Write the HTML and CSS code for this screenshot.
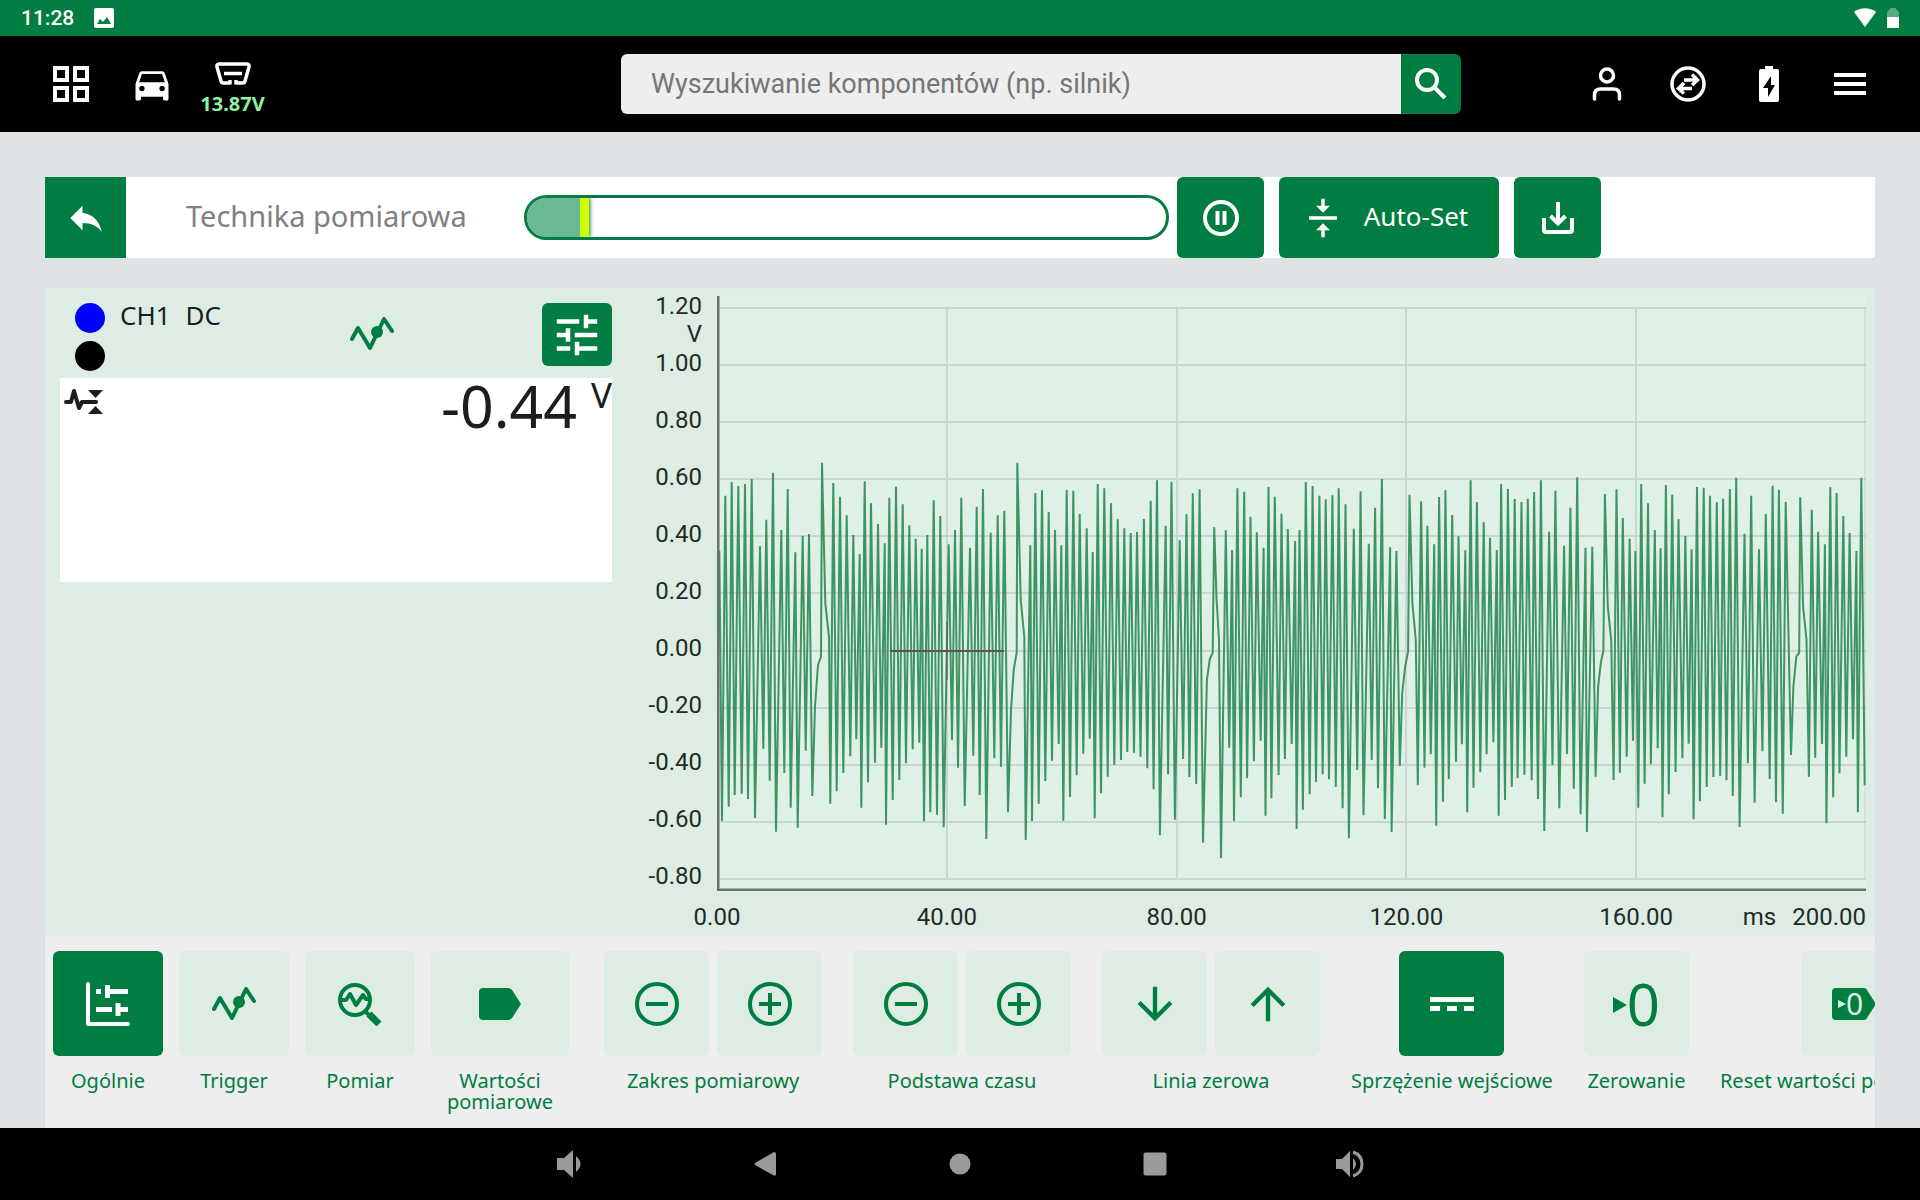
FILE: index.html
```html
<!DOCTYPE html>
<html lang="pl">
<head>
<meta charset="utf-8">
<title>Technika pomiarowa</title>
<meta name="viewport" content="width=device-width, initial-scale=1">
<link rel="stylesheet" href="styles.css">
</head>
<body>
<div class="status">
  <span class="clock">11:28</span>
  <svg width="20" height="20" viewBox="0 0 20 20"><path fill="#fff" fill-rule="evenodd" d="M2 0h16a2 2 0 0 1 2 2v16a2 2 0 0 1-2 2H2a2 2 0 0 1-2-2V2a2 2 0 0 1 2-2zM3 16h14l-4-7-4 5-3-3z"/></svg>
  <svg class="status-end" width="22" height="20" viewBox="0 0 22 20"><path fill="#fff" d="M0 4C6-1 16-1 22 4L11 19z"/></svg>
  <svg width="12" height="20" viewBox="0 0 12 20"><path fill="#fff" opacity=".35" d="M0 4l3-3V0h6v1l3 3v5H0z"/><path fill="#fff" d="M0 9h12v11H0z"/></svg>
</div>

<header class="header">
  <button class="nav-btn" aria-label="Menu główne"><svg width="36" height="36" viewBox="0 0 36 36" fill="none" stroke="#fff" stroke-width="4"><path d="M2 2h12v12H2zM22 2h12v12H22zM2 22h12v12H2zM22 22h12v12H22z"/></svg></button>
  <button class="nav-btn" aria-label="Pojazd"><svg width="44" height="44" viewBox="0 0 24 24" fill="#fff"><path d="M18.92 6.01C18.72 5.42 18.16 5 17.5 5h-11c-.66 0-1.21.42-1.42 1.01L3 12v8c0 .55.45 1 1 1h1c.55 0 1-.45 1-1v-1h12v1c0 .55.45 1 1 1h1c.55 0 1-.45 1-1v-8l-2.08-5.99zM6.5 16c-.83 0-1.5-.67-1.5-1.5S5.67 13 6.5 13s1.5.67 1.5 1.5S7.33 16 6.5 16zm11 0c-.83 0-1.5-.67-1.5-1.5s.67-1.5 1.5-1.5 1.5.67 1.5 1.5-.67 1.5-1.5 1.5zM5 11l1.5-4.5h11L19 11H5z"/></svg></button>
  <button class="nav-btn nav-obd"><svg width="36" height="24" viewBox="0 0 36 24" fill="none" stroke="#fff" stroke-width="3.5"><path stroke-linejoin="round" d="M15 21H8.500q-2 0-2.500-2L2 5q-.5-3 2-3h28q2.500 0 2 3l-4 14q-.5 2-2.500 2H21M15 18v4.500M21 18v4.500"/><path d="M9 11.500h18"/></svg><span>13.87V</span></button>
  <form class="search" role="search">
    <input type="search" aria-label="Wyszukiwanie komponentów" placeholder="Wyszukiwanie komponentów (np. silnik)">
    <button type="button" aria-label="Szukaj"><svg width="34" height="34" viewBox="0 0 34 34" fill="none" stroke="#fff" stroke-width="4"><circle cx="13" cy="13" r="10"/><path d="M20 20l11 11"/></svg></button>
  </form>
  <button class="nav-btn" aria-label="Użytkownik"><svg width="36" height="36" viewBox="0 0 36 36" fill="none" stroke="#fff" stroke-width="3.500" stroke-linecap="round"><circle cx="18" cy="9.500" r="6.500"/><path d="M5.500 33v-4q0-6 6-6h13q6 0 6 6v4"/></svg></button>
  <button class="nav-btn" aria-label="Połączenie"><svg width="36" height="36" viewBox="0 0 36 36" fill="none" stroke="#fff" stroke-width="3.500"><circle cx="18" cy="18" r="16"/><path d="M14 14h13M22 8.500l5.500 5.500-5.500 5M22 22.500H9M14 17l-5.500 5.500 5.500 5"/></svg></button>
  <button class="nav-btn" aria-label="Akumulator"><svg width="20" height="36" viewBox="0 0 20 36"><path fill="#fff" fill-rule="evenodd" d="M6 0h8v3h4q2 0 2 2v29q0 2-2 2H2q-2 0-2-2V5q0-2 2-2h4zM12 10L4 22h5v9l7-12h-4z"/></svg></button>
  <button class="nav-btn" aria-label="Menu"><svg width="32" height="24" viewBox="0 0 32 24" stroke="#fff" stroke-width="4"><path d="M0 3h32M0 12h32M0 21h32"/></svg></button>
</header>

<main class="page">
  <div class="toolbar">
    <button class="back" aria-label="Wstecz"><svg width="42" height="42" viewBox="0 0 24 24" fill="#fff"><path d="M10 9V5l-7 7 7 7v-4.100c5 0 8.500 1.600 11 5.100-1-5-4-10-11-11z"/></svg></button>
    <h1>Technika pomiarowa</h1>
    <div class="progress" role="progressbar" aria-label="Bufor" aria-valuenow="10"><div class="fill" style="width:9.7%"></div></div>
    <button class="tool" aria-label="Pauza"><svg width="36" height="36" viewBox="0 0 36 36" fill="none" stroke="#fff" stroke-width="4"><circle cx="18" cy="18" r="16"/><path d="M14.500 11v14M21.500 11v14"/></svg></button>
    <button class="tool tool-auto"><svg width="42" height="42" viewBox="0 0 24 24" fill="#fff"><path d="M8 19h3v4h2v-4h3l-4-4-4 4zm8-14h-3V1h-2v4H8l4 4 4-4zM4 11v2h16v-2H4z"/></svg><span>Auto-Set</span></button>
    <button class="tool" aria-label="Zapisz"><svg width="32" height="32" viewBox="0 0 32 32" fill="none" stroke="#fff" stroke-width="4"><path stroke-linejoin="round" d="M2 16v12q0 2 2 2h24q2 0 2-2V16"/><path d="M16 0v21M8.500 14l7.500 7.500 7.500-7.500"/></svg></button>
  </div>

  <section class="scope">
    <div class="channel">
      <div class="channel-head">
        <div class="probes"><i class="probe blue"></i><i class="probe"></i></div>
        <div class="channel-name"><span>CH1</span><span>DC</span></div>
        <svg class="trigger" width="44" height="36" viewBox="0 0 44 36"><use href="#wave"/></svg>
        <button class="tune" aria-label="Ustawienia kanału"><svg width="54" height="54" viewBox="0 0 24 24" fill="#fff"><path d="M3 17v2h6v-2H3zM3 5v2h10V5H3zm10 16v-2h8v-2h-8v-2h-2v6h2zM7 9v2H3v2h4v2h2V9H7zm14 4v-2H11v2h10zm-6-4h2V7h4V5h-4V3h-2v6z"/></svg></button>
      </div>
      <div class="reading">
        <svg width="40" height="28" viewBox="0 0 40 28" fill="none" stroke="#1d1d1d"><path stroke-width="4" stroke-linecap="round" stroke-linejoin="round" d="M2 14h5L10 3l5 17 3-6h14"/><path fill="#1d1d1d" stroke="none" d="M24 2h15l-7.500 8zM24 26h15l-7.500-8z"/></svg>
        <output class="value">-0.44</output><span class="unit">V</span>
      </div>
    </div>

    <figure class="chart">
      <ol class="y-axis">
        <li>1.20<span class="y-unit">V</span></li><li>1.00</li><li>0.80</li><li>0.60</li><li>0.40</li><li>0.20</li><li>0.00</li><li>-0.20</li><li>-0.40</li><li>-0.60</li><li>-0.80</li>
      </ol>
      <svg class="plot" viewBox="717 296 1149 595" preserveAspectRatio="none" role="img" aria-label="Przebieg napięcia CH1">
        <path class="plot-bg" d="M717 296h1149v595H717z"/>
        <polyline id="signal" class="signal" points=""/>
        <path class="grid" d="M718 308h1148M718 365h1148M718 422h1148M718 479h1148M718 536h1148M718 593h1148M718 651h1148M718 708h1148M718 765h1148M718 822h1148M718 879h1148M947 308v571M1177 308v571M1406 308v571M1636 308v571"/>
        <path class="grid faint" d="M1865 308v571"/>
        <path class="cross" d="M890 651h114"/><path class="cross faint" d="M947 622v58"/>
        <path class="axis" d="M718 296v594h1148"/>
      </svg>
      <ol class="x-axis">
        <li>0.00</li><li>40.00</li><li>80.00</li><li>120.00</li><li>160.00</li><li class="last"><span>ms</span><span>200.00</span></li>
      </ol>
    </figure>
  </section>

  <nav class="strip">
    <div class="item tab"><button class="key active" aria-labelledby="l1"><svg width="44" height="44" viewBox="0 0 44 44" fill="none" stroke="#fff"><path stroke-width="4" stroke-linecap="round" stroke-linejoin="round" d="M2 2v40h40"/><path stroke-width="5" d="M10 9.500h5M21 9.500h21M21.500 3v13M10 27.500h16M32 27.500h10M32 21v13"/></svg></button><span class="label" id="l1">Ogólnie</span></div>
    <div class="item tab"><button class="key" aria-labelledby="l2"><svg width="44" height="36" viewBox="0 0 44 36"><g id="wave"><path fill="none" stroke="#007d41" stroke-width="4" stroke-linecap="round" stroke-linejoin="round" d="M2 23L8 12l12 20L34 3l8 12"/><circle cx="27" cy="16" r="6" fill="#007d41"/></g></svg></button><span class="label" id="l2">Trigger</span></div>
    <div class="item tab"><button class="key" aria-labelledby="l3"><svg width="44" height="44" viewBox="0 0 44 44" fill="none" stroke="#007d41"><circle stroke-width="4" cx="17" cy="18" r="15"/><path stroke-width="4" stroke-linejoin="round" d="M3 18h5l4-6 6 11 7-10 3 4h4"/><path stroke-width="4" d="M26 28l6 6"/><path stroke-width="7" d="M31 32l10 10"/></svg></button><span class="label" id="l3">Pomiar</span></div>
    <div class="item tab wide"><button class="key" aria-labelledby="l4"><svg width="42" height="32" viewBox="0 0 42 32"><path fill="#007d41" d="M4 0h25q2 0 4 2l9 14-9 14q-2 2-4 2H4q-4 0-4-4V4q0-4 4-4z"/></svg></button><span class="label" id="l4">Wartości pomiarowe</span></div>
    <div class="item group"><div class="pair">
      <button class="key" aria-label="Zakres mniej"><svg width="44" height="44" viewBox="0 0 44 44" fill="none" stroke="#007d41" stroke-width="4"><circle cx="22" cy="22" r="20"/><path d="M11 22h22"/></svg></button>
      <button class="key" aria-label="Zakres więcej"><svg width="44" height="44" viewBox="0 0 44 44" fill="none" stroke="#007d41" stroke-width="4"><circle cx="22" cy="22" r="20"/><path d="M11 22h22M22 11v22"/></svg></button></div><span class="label">Zakres pomiarowy</span></div>
    <div class="item group"><div class="pair">
      <button class="key" aria-label="Czas mniej"><svg width="44" height="44" viewBox="0 0 44 44" fill="none" stroke="#007d41" stroke-width="4"><circle cx="22" cy="22" r="20"/><path d="M11 22h22"/></svg></button>
      <button class="key" aria-label="Czas więcej"><svg width="44" height="44" viewBox="0 0 44 44" fill="none" stroke="#007d41" stroke-width="4"><circle cx="22" cy="22" r="20"/><path d="M11 22h22M22 11v22"/></svg></button></div><span class="label">Podstawa czasu</span></div>
    <div class="item group"><div class="pair">
      <button class="key" aria-label="Linia w dół"><svg width="52" height="52" viewBox="0 0 24 24" fill="#007d41"><path d="M20 12l-1.410-1.410L13 16.170V4h-2v12.170l-5.580-5.590L4 12l8 8 8-8z"/></svg></button>
      <button class="key" aria-label="Linia w górę"><svg width="52" height="52" viewBox="0 0 24 24" fill="#007d41"><path d="M4 12l1.410 1.410L11 7.830V20h2V7.830l5.580 5.590L20 12l-8-8-8 8z"/></svg></button></div><span class="label">Linia zerowa</span></div>
    <div class="item group"><button class="key active" aria-labelledby="l5"><svg width="44" height="20" viewBox="0 0 44 20" fill="#fff"><path d="M0 3h44v5H0zM0 12h10v5H0zM17 12h10v5H17zM34 12h10v5H34z"/></svg></button><span class="label" id="l5">Sprzężenie wejściowe</span></div>
    <div class="item group"><button class="key zero" aria-labelledby="l6"><svg width="14" height="16" viewBox="0 0 14 16"><path fill="#007d41" d="M0 0l14 8-14 8z"/></svg>0</button><span class="label" id="l6">Zerowanie</span></div>
    <div class="item group"><button class="key" aria-labelledby="l7"><svg width="44" height="32" viewBox="0 0 44 32"><path fill="#007d41" d="M4 0h28q2 0 3 2l9 14-9 14q-1 2-3 2H4q-4 0-4-4V4q0-4 4-4z"/><path fill="#deede4" d="M6 12l8 4-8 4z"/><text class="tag-zero" x="14" y="27">0</text></svg></button><span class="label" id="l7">Reset wartości pomiarowych</span></div>
  </nav>
</main>

<footer class="system">
  <button aria-label="Ciszej"><svg width="26" height="28" viewBox="0 0 26 28" fill="#9a9a9a"><path d="M0 8h7l9-8v28l-9-8H0zM19 6q9 8 0 16z"/></svg></button>
  <button aria-label="Wstecz"><svg width="22" height="26" viewBox="0 0 22 26" fill="#9a9a9a"><path d="M20 1q2 0 2 2v20q0 3-3 1L1 14q-1-1 0-2z"/></svg></button>
  <button aria-label="Ekran główny"><svg width="22" height="22" viewBox="0 0 22 22" fill="#9a9a9a"><circle cx="11" cy="11" r="10.500"/></svg></button>
  <button aria-label="Ostatnie"><svg width="24" height="24" viewBox="0 0 24 24" fill="#9a9a9a"><rect x=".5" y=".5" width="23" height="23" rx="2"/></svg></button>
  <button aria-label="Głośniej"><svg width="28" height="28" viewBox="0 0 28 28" fill="#9a9a9a"><path d="M0 9h6l8-8v26l-8-8H0zM17 8q6 6 0 12z"/><path fill="none" stroke="#9a9a9a" stroke-width="3" d="M17 2q9 3 9 12t-9 12"/></svg></button>
</footer>
<script src="chart.js"></script>
</body>
</html>
```
FILE: styles.css
```css
* { box-sizing: border-box; }
body {
  margin: 0;
  min-height: 100vh;
  display: flex;
  flex-direction: column;
  background: #dfe3e6;
  font-family: "Noto Sans", sans-serif;
  overflow-x: hidden;
}
button { border: 0; padding: 0; margin: 0; background: none; color: inherit; font: inherit; display: flex; align-items: center; justify-content: center; }
svg { display: block; flex: none; }
ol { list-style: none; margin: 0; padding: 0; }

.status { height: 36px; padding: 0 21px; display: flex; align-items: center; gap: 20px; background: #007d41; color: #fff; }
.clock { font: 500 21px/24px Roboto, sans-serif; }
.status-end { margin-left: auto; margin-right: -9px; }

.header { height: 96px; padding: 0 30px; display: flex; align-items: center; background: #000; }
.nav-btn { flex: none; width: 81px; height: 96px; }
.nav-obd { flex-direction: column; gap: 4px; padding-top: 12px; color: #90f0a4; font-weight: 700; font-size: 20px; line-height: 28px; }
.search { flex: 0 1 840px; margin: 0 105px 0 auto; height: 60px; display: flex; border-radius: 6px; overflow: hidden; }
.search input { flex: 1; min-width: 0; border: 0; padding: 0 30px; background: #eee; font: 27px Roboto, sans-serif; color: #222; }
.search input::placeholder { color: #757575; opacity: 1; }
.search button { width: 60px; background: #007d41; }

.page { flex: 1; padding: 45px 45px 0; display: flex; flex-direction: column; }
.toolbar { height: 81px; padding-right: 274px; display: flex; align-items: center; background: #fff; }
.back { flex: none; width: 81px; height: 81px; background: #007d41; }
.toolbar h1 { flex: none; width: 398px; margin: 0; padding: 0 0 4px 60px; font-size: 29px; font-weight: 400; line-height: 40px; color: #808080; white-space: nowrap; }
.progress { flex: 1; height: 45px; margin-right: 8px; border: 3px solid #087a45; border-radius: 23px; overflow: hidden; background: #fff; }
.fill { height: 100%; background: #6ab896; border-right: 9px solid #d0ff00; box-shadow: 1px 0 4px #087a45; }
.tool { flex: none; width: 87px; height: 81px; border-radius: 6px; background: #007d41; color: #fff; font-size: 26px; gap: 20px; }
.tool + .tool { margin-left: 15px; }
.tool-auto { width: 220px; padding-right: 8px; }
.tool-auto span { padding-bottom: 3px; }

.scope { flex: 1; margin-top: 30px; display: grid; grid-template-columns: 567px 1fr; background: #deede4; }
.channel { padding: 15px 0 0 15px; }
.channel-head { height: 75px; display: flex; align-items: flex-start; color: #1d1d1d; }
.probes { padding-left: 15px; width: 60px; display: grid; gap: 8px; }
.probe { width: 30px; height: 30px; border-radius: 50%; background: #000; }
.blue { background: #00f; }
.channel-name { display: flex; gap: 15px; font-size: 26px; line-height: 24px; }
.trigger { margin: 13px 148px 0 auto; }
.tune { width: 70px; height: 63px; border-radius: 6px; background: #007d41; }
.reading { height: 204px; padding-left: 4px; display: flex; align-items: flex-start; background: #fff; color: #1d1d1d; }
.reading svg { margin-top: 10px; }
.value { margin-left: auto; font-size: 59px; line-height: 55px; }
.unit { margin-left: 14px; font-size: 35px; line-height: 34px; }

.chart { margin: 0 9px 0 0; display: grid; grid-template-columns: 105px 1fr; grid-template-rows: 1fr auto; font: 24px/28px Roboto, sans-serif; color: #222b27; }
.y-axis { padding: 4px 15px 1px 0; display: flex; flex-direction: column; justify-content: space-between; text-align: right; }
.y-axis li { position: relative; }
.y-unit { position: absolute; right: 0; top: 28px; }
.plot { width: 100%; height: 595px; margin-top: 8px; }
.plot-bg { fill: #dff0e7; }
.grid { stroke: #6a6a78; stroke-opacity: .18; stroke-width: 2; fill: none; }
.axis { stroke: #65746c; stroke-width: 3; fill: none; }
.cross { stroke: #5c5551; stroke-width: 2; }
.faint { opacity: .5; }
.signal { fill: none; stroke: #117a40; stroke-width: 2; stroke-opacity: .78; stroke-linejoin: bevel; }
.x-axis { grid-column: 2; padding-top: 6px; height: 45px; display: flex; justify-content: space-between; line-height: 40px; }
.x-axis li { width: 0; display: flex; justify-content: center; }
.x-axis .last { justify-content: flex-end; gap: 16px; }

.strip { height: 192px; padding: 15px 8px 0; display: flex; align-items: flex-start; overflow: hidden; background: #eee; color: #007d41; }
.item { flex: none; display: flex; flex-direction: column; align-items: center; gap: 14px; }
.label { font-size: 20px; line-height: 21px; text-align: center; white-space: nowrap; }
.key { width: 105px; height: 105px; border-radius: 6px; background: #deede4; }
.active { background: #007d41; }
.tab { width: 110px; margin-right: 16px; }
.tab .key { width: 100%; }
.wide { width: 138px; margin-right: 35px; }
.wide .label { width: 120px; white-space: normal; }
.group { margin-right: 31px; }
.pair { display: flex; gap: 8px; }
.zero { font-size: 58px; line-height: 58px; }
.zero svg { margin-top: 2px; }
.tag-zero { font: 30px "Noto Sans", sans-serif; fill: #deede4; }

.system { height: 72px; display: flex; justify-content: center; background: #000; }
.system button { width: 195px; height: 72px; }
```
FILE: chart.js
```js
// Turning points of the captured signal. Each block has its own origin and
// resolution (raw units per plot unit); points are x,y pairs.
const blocks = [
  { x: 640, y: 280, sx: 3, sy: 3, points: [
    238,812, 256,647, 275,606, 295,618, 315,612, 335,597, 360,799, 379,719, 399,578, 424,750,
    443,627, 466,817, 488,767, 507,762, 546,548, 580,609, 600,650, 620,706, 640,765, 659,822,
    674,604, 693,670, 714,732, 734,790, 748,653, 768,620, 788,673, 808,736, 827,776, 845,806,
    862,765, 881,661, 901,708, 926,793, 945,750, 964,653, 990,803, 1010,680, 1029,627, 1052,758,
    1073,706, 1093,692, 1132,548, 1171,796, 1186,639, 1206,631, 1226,696, 1245,750, 1264,796,
    1280,630, 1300,632, 1319,702, 1340,745, 1358,816, 1373,612, 1393,625, 1413,670, 1433,718,
    1453,745, 1472,759, 1491,756] },
  { x: 640, y: 600, sx: 3, sy: 3, points: [
    246,663, 266,620, 284,585, 305,581, 324,597, 345,655, 370,446, 389,542, 408,695, 433,519,
    452,623, 473,683, 497,452, 517,588, 525,320, 534,195, 543,170, 556,10, 567,110, 571,611,
    590,574, 610,519, 631,469, 649,418, 664,623, 684,547, 705,488, 724,443, 738,674, 758,600,
    778,540, 798,490, 818,448, 838,428, 852,664, 871,637, 891,644, 911,682, 936,421, 954,503,
    974,618, 1000,467, 1019,585, 1039,717, 1063,475, 1083,500, 1104,637, 1113,330, 1121,210,
    1130,157, 1142,0, 1153,110, 1157,720, 1176,663, 1196,611, 1216,543, 1236,482, 1256,432,
    1270,662, 1290,591, 1310,526, 1330,461, 1349,416, 1364,655, 1383,580, 1403,530, 1423,495,
    1443,480, 1462,456, 1482,458] },
  { x: 1140, y: 440, sx: 2.063, sy: 3, points: [
    8,237, 22,182, 35,121, 53,257, 65,125, 82,300, 96,223, 109,160, 123,148, 153,262, 177,271,
    190,330, 201,145, 215,155, 228,230, 241,277, 255,323, 265,141, 278,170, 292,221, 305,267,
    320,303, 329,270, 342,126, 356,138, 370,167, 383,178, 397,166, 410,145, 424,193, 441,266,
    455,154, 472,311, 485,203, 499,117, 516,322, 529,333, 556,164, 580,184, 593,257, 607,313,
    617,171, 630,151, 644,225, 657,289, 671,331, 682,121, 695,186, 709,247, 722,293, 736,330,
    745,132, 759,147, 773,177, 787,186, 800,176, 813,156, 827,121, 844,275, 857,152, 875,317,
    888,203, 902,112, 919,323, 933,320, 959,162, 983,148, 996,234, 1010,296, 1022,333, 1034,132,
    1048,190, 1062,270, 1074,325, 1085,135, 1098,164, 1111,238, 1125,288, 1138,328, 1149,141,
    1163,143, 1176,167, 1190,187, 1203,176, 1217,147, 1230,113, 1247,281, 1261,167, 1277,328,
    1291,222, 1305,137, 1318,149, 1332,186, 1362,172, 1386,209, 1399,275, 1413,313, 1424,142,
    1437,159, 1451,228, 1464,279, 1478,333, 1488,113,
    1,950, 15,985, 28,1048, 41,1186, 58,1003, 72,1139, 89,957, 102,1011, 116,1032, 130,1208,
    138,720, 144,657, 150,638, 158,480, 163,600, 167,1255, 184,923, 194,1143, 208,1072, 221,1015,
    235,964, 249,902, 259,1127, 271,1075, 286,1005, 299,957, 313,912, 323,1167, 336,1109,
    350,1063, 363,1026, 377,1003, 390,1018, 404,1041, 418,1105, 431,1195, 448,990, 461,1126,
    478,960, 491,1045, 505,1137, 519,1176, 536,978, 541,760, 547,680, 553,634, 562,490, 569,600,
    573,1036, 587,983, 600,943, 611,1157, 625,1085, 637,1018, 652,965, 664,913, 675,1117,
    688,1043, 702,997, 715,943, 729,907, 740,1127, 753,1080, 767,1041, 779,1015, 793,1004,
    808,1021, 821,1077, 834,1173, 851,976, 865,1105, 881,942, 895,1046, 909,1123, 922,1176,
    940,1010, 945,740, 951,665, 956,632, 965,500, 972,600, 977,1020, 990,998, 1004,950, 1017,902,
    1028,1103, 1041,1031, 1054,973, 1068,925, 1078,1132, 1091,1063, 1105,996, 1119,955, 1132,911,
    1142,1138, 1155,1084, 1169,1041, 1183,1011, 1197,1008, 1210,1021, 1223,1068, 1237,1161,
    1254,970, 1268,1088, 1284,934, 1299,1017, 1312,1087, 1326,1121, 1343,945, 1348,740, 1354,650,
    1360,638, 1368,500, 1375,600, 1380,1010, 1393,953, 1407,912, 1416,1150, 1430,1072, 1443,1000,
    1457,950, 1471,898, 1481,1117, 1495,1036] }
];

const samples = [];
for (const b of blocks) {
  for (let i = 0; i < b.points.length; i += 2) {
    samples.push([b.x + b.points[i] / b.sx, b.y + b.points[i + 1] / b.sy]);
  }
}
samples.sort((p, q) => p[0] - q[0]);
document.getElementById('signal').setAttribute(
  'points', samples.map(p => p[0].toFixed(1) + ',' + p[1].toFixed(1)).join(' '));
```
